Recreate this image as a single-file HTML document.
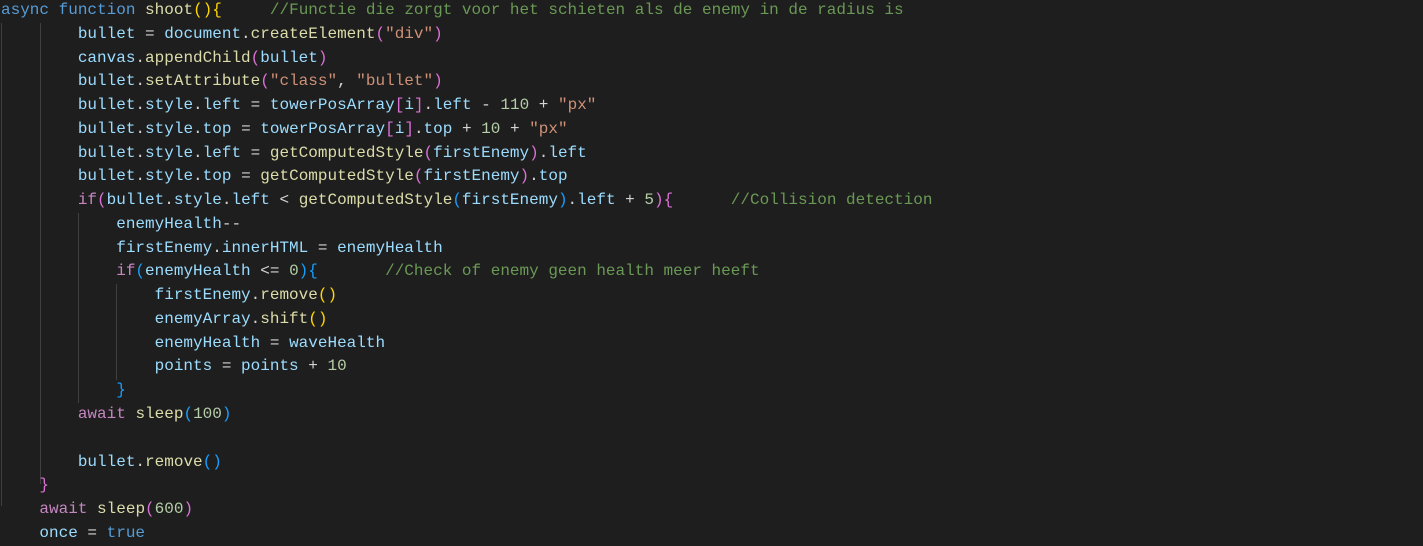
<!DOCTYPE html>
<html><head><meta charset="utf-8"><style>
html,body{margin:0;padding:0;background:#1e1e1e;width:1423px;height:542px;overflow:hidden}
#c{position:absolute;left:1px;top:-1px;font-family:"Liberation Mono",monospace;font-size:16px;line-height:23.77px;color:#d4d4d4}
.l{height:23.77px;position:relative;white-space:pre}
.v{color:#9cdcfe}.f{color:#dcdcaa}.s{color:#ce9178}.c{color:#6a9955}.k{color:#569cd6}.p{color:#c586c0}.n{color:#b5cea8}
.b1{color:#ffd700}.b2{color:#da70d6}.b3{color:#179fff}
.g{position:absolute;width:1px;background:#404040}
</style></head><body>
<div class="g" style="left:1px;top:23px;height:483px"></div>
<div class="g" style="left:40px;top:23px;height:461px"></div>
<div class="g" style="left:78px;top:213px;height:190px"></div>
<div class="g" style="left:116px;top:284px;height:96px"></div>
<div id="c">
<div class="l"><span class="k">async</span> <span class="k">function</span> <span class="f">shoot</span><span class="b1">(){</span>     <span class="c">//Functie die zorgt voor het schieten als de enemy in de radius is</span></div>
<div class="l">        <span class="v">bullet</span> = <span class="v">document</span>.<span class="f">createElement</span><span class="b2">(</span><span class="s">"div"</span><span class="b2">)</span></div>
<div class="l">        <span class="v">canvas</span>.<span class="f">appendChild</span><span class="b2">(</span><span class="v">bullet</span><span class="b2">)</span></div>
<div class="l">        <span class="v">bullet</span>.<span class="f">setAttribute</span><span class="b2">(</span><span class="s">"class"</span>, <span class="s">"bullet"</span><span class="b2">)</span></div>
<div class="l">        <span class="v">bullet</span>.<span class="v">style</span>.<span class="v">left</span> = <span class="v">towerPosArray</span><span class="b2">[</span><span class="v">i</span><span class="b2">]</span>.<span class="v">left</span> - <span class="n">110</span> + <span class="s">"px"</span></div>
<div class="l">        <span class="v">bullet</span>.<span class="v">style</span>.<span class="v">top</span> = <span class="v">towerPosArray</span><span class="b2">[</span><span class="v">i</span><span class="b2">]</span>.<span class="v">top</span> + <span class="n">10</span> + <span class="s">"px"</span></div>
<div class="l">        <span class="v">bullet</span>.<span class="v">style</span>.<span class="v">left</span> = <span class="f">getComputedStyle</span><span class="b2">(</span><span class="v">firstEnemy</span><span class="b2">)</span>.<span class="v">left</span></div>
<div class="l">        <span class="v">bullet</span>.<span class="v">style</span>.<span class="v">top</span> = <span class="f">getComputedStyle</span><span class="b2">(</span><span class="v">firstEnemy</span><span class="b2">)</span>.<span class="v">top</span></div>
<div class="l">        <span class="p">if</span><span class="b2">(</span><span class="v">bullet</span>.<span class="v">style</span>.<span class="v">left</span> &lt; <span class="f">getComputedStyle</span><span class="b3">(</span><span class="v">firstEnemy</span><span class="b3">)</span>.<span class="v">left</span> + <span class="n">5</span><span class="b2">){</span>      <span class="c">//Collision detection</span></div>
<div class="l">            <span class="v">enemyHealth</span>--</div>
<div class="l">            <span class="v">firstEnemy</span>.<span class="v">innerHTML</span> = <span class="v">enemyHealth</span></div>
<div class="l">            <span class="p">if</span><span class="b3">(</span><span class="v">enemyHealth</span> &lt;= <span class="n">0</span><span class="b3">){</span>       <span class="c">//Check of enemy geen health meer heeft</span></div>
<div class="l">                <span class="v">firstEnemy</span>.<span class="f">remove</span><span class="b1">()</span></div>
<div class="l">                <span class="v">enemyArray</span>.<span class="f">shift</span><span class="b1">()</span></div>
<div class="l">                <span class="v">enemyHealth</span> = <span class="v">waveHealth</span></div>
<div class="l">                <span class="v">points</span> = <span class="v">points</span> + <span class="n">10</span></div>
<div class="l">            <span class="b3">}</span></div>
<div class="l">        <span class="p">await</span> <span class="f">sleep</span><span class="b3">(</span><span class="n">100</span><span class="b3">)</span></div>
<div class="l"> </div>
<div class="l">        <span class="v">bullet</span>.<span class="f">remove</span><span class="b3">()</span></div>
<div class="l">    <span class="b2">}</span></div>
<div class="l">    <span class="p">await</span> <span class="f">sleep</span><span class="b2">(</span><span class="n">600</span><span class="b2">)</span></div>
<div class="l">    <span class="v">once</span> = <span class="k">true</span></div>
</div>
</body></html>
